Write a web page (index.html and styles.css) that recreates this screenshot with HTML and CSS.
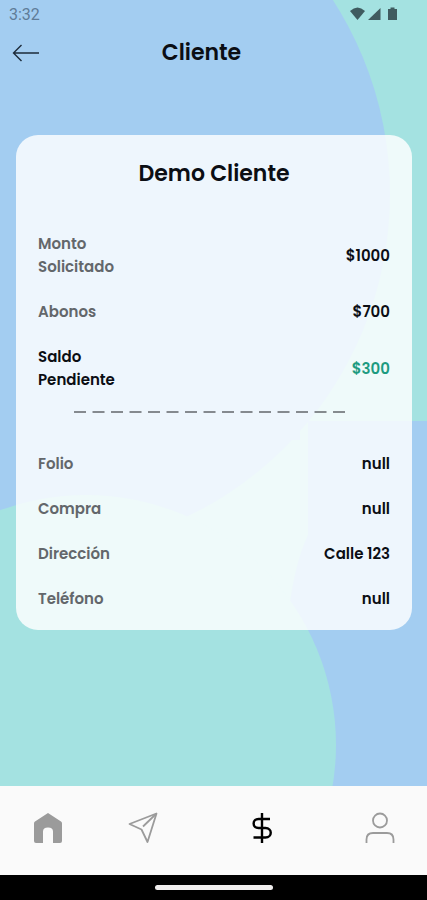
FILE: index.html
```
<!DOCTYPE html>
<html lang="es">
  <head>
    <meta charset="UTF-8" />
    <meta name="viewport" content="width=device-width, initial-scale=1.0" />
    <title>Cliente</title>
    <link rel="stylesheet" href="styles.css">
  </head>
  <body>
    <svg class="backdrop" viewBox="0 0 427 900" preserveAspectRatio="xMidYMid slice" aria-hidden="true">
      <path class="teal" d="M300 0H427V421H308V535Q296 560 290 602H0V440H300Z" />
      <circle class="blue" cx="32" cy="194" r="358" />
      <circle class="teal" cx="86" cy="745" r="250" />
    </svg>

    <div class="status-bar">
      <span>3:32</span>
      <svg class="status-icons" viewBox="0 0 48 14" aria-hidden="true">
        <path d="M0 4Q7.500 -3 15 4L7.500 13Z" />
        <path d="M18 13L30.500 1V13Z" />
        <path d="M38 2H40.500V0.500H44.500V2H47V13H38Z" />
      </svg>
    </div>

    <header class="top-bar">
      <button class="back-btn" type="button" aria-label="Volver">
        <svg viewBox="0 0 28 18">
          <path d="M27 9H1.500M9.500 1L1.500 9L9.500 17" />
        </svg>
      </button>
      <h1>Cliente</h1>
    </header>

    <main>
      <section class="card">
        <h2>Demo Cliente</h2>

        <dl class="details">
          <div class="row">
            <dt>Monto Solicitado</dt>
            <dd>$1000</dd>
          </div>
          <div class="row">
            <dt>Abonos</dt>
            <dd>$700</dd>
          </div>
          <div class="row balance">
            <dt>Saldo Pendiente</dt>
            <dd>$300</dd>
          </div>
        </dl>

        <svg class="divider" viewBox="0 0 271 2" aria-hidden="true">
          <path d="M0 1H271" />
        </svg>

        <dl class="details">
          <div class="row">
            <dt>Folio</dt>
            <dd>null</dd>
          </div>
          <div class="row">
            <dt>Compra</dt>
            <dd>null</dd>
          </div>
          <div class="row">
            <dt>Dirección</dt>
            <dd>Calle 123</dd>
          </div>
          <div class="row">
            <dt>Teléfono</dt>
            <dd>null</dd>
          </div>
        </dl>
      </section>
    </main>

    <nav class="tab-bar">
      <a href="#inicio" aria-label="Inicio">
        <svg viewBox="0 0 30 32">
          <path class="solid" d="M15 1L28 9.500Q29 10.200 29 11.500V29Q29 31 27 31H20V19.500Q20 15.500 15 15.500T10 19.500V31H3Q1 31 1 29V11.500Q1 10.200 2 9.500Z" />
        </svg>
      </a>
      <a href="#enviar" aria-label="Enviar">
        <svg viewBox="0 0 30 32">
          <path d="M28.500 1.500L1.500 12L13.500 17.500L19.500 30Z" />
          <path d="M28 2L15 14.500" />
        </svg>
      </a>
      <a class="active" href="#pagos" aria-label="Pagos" aria-current="page">
        <svg viewBox="0 0 30 32">
          <path d="M15 1V31M23 7H11.500C5 7 5 16 11.500 16H18.500C25.500 16 25.500 25.500 18.500 25.500H6.500" />
        </svg>
      </a>
      <a href="#perfil" aria-label="Perfil">
        <svg viewBox="0 0 30 32">
          <circle cx="15" cy="8.500" r="7" />
          <path d="M1.500 31V27.500Q1.500 21 8 21H22Q28.500 21 28.500 27.500V31" />
        </svg>
      </a>
    </nav>

    <div class="home-indicator"></div>
  </body>
</html>
```

FILE: styles.css
```
* {
  box-sizing: border-box;
}
body {
  margin: 0;
  min-height: 100vh;
  display: flex;
  flex-direction: column;
  position: relative;
  font-family: Poppins, Inter, sans-serif;
  background: #a3cdf1;
  color: #0b0e14;
}
h1,
h2 {
  margin: 0;
  font-size: 22px;
  font-weight: 600;
  line-height: 32px;
  text-align: center;
}
.backdrop {
  position: absolute;
  top: 0;
  left: 0;
  width: 100%;
  height: 100%;
  z-index: -1;
}
.teal {
  fill: #a4e2e1;
}
.blue {
  fill: #a3cdf1;
}
.status-bar {
  display: flex;
  align-items: center;
  justify-content: space-between;
  height: 28px;
  padding: 0 29px 0 9px;
  font-family: Roboto, sans-serif;
  font-size: 16px;
  color: #5f7c98;
}
.status-icons {
  width: 48px;
  height: 14px;
  fill: #3f5b5f;
}
.top-bar {
  display: grid;
  grid-template-columns: 40px 1fr 64px;
  align-items: center;
  height: 50px;
}
.back-btn {
  display: flex;
  justify-content: flex-end;
  padding: 0;
  border: none;
  background: none;
  cursor: pointer;
}
.back-btn svg {
  width: 28px;
  height: 18px;
  fill: none;
  stroke: #1c2b3a;
  stroke-width: 1.4;
}
main {
  flex: 1;
  padding: 57px 15px 24px 16px;
}
.card {
  padding: 23px 22px 20px;
  border-radius: 22px;
  background: rgba(255, 255, 255, 0.82);
}
.details {
  display: flex;
  flex-direction: column;
  gap: 22px;
  margin: 0;
  font-size: 15px;
  font-weight: 600;
  line-height: 23px;
}
h2 + .details {
  margin-top: 42px;
}
.row {
  display: flex;
  align-items: center;
  justify-content: space-between;
}
.row dt {
  max-width: 30%;
  color: #63676b;
}
.row dd {
  margin: 0;
}
.balance dt {
  color: #0b0e14;
}
.balance dd {
  color: #1d9b80;
}
.divider {
  display: block;
  width: 77%;
  margin: 20px 0 39px 36px;
  stroke: #63676b;
  stroke-width: 1.6;
  stroke-dasharray: 12 6.5;
}
.tab-bar {
  display: grid;
  grid-template-columns: 96fr 94fr 143fr 94fr;
  height: 89px;
  background: #fafafa;
}
.tab-bar a {
  display: flex;
  align-items: center;
  justify-content: center;
  padding-bottom: 5px;
  color: #9b9b9b;
}
.tab-bar svg {
  width: 30px;
  height: 32px;
  fill: none;
  stroke: currentColor;
  stroke-width: 1.8;
  stroke-linejoin: round;
}
.tab-bar .solid {
  fill: currentColor;
  stroke: none;
}
.tab-bar .active {
  color: #000;
}
.active svg {
  stroke-width: 2.4;
}
.home-indicator {
  display: flex;
  align-items: center;
  justify-content: center;
  height: 25px;
  background: #000;
}
.home-indicator::before {
  content: "";
  width: 118px;
  height: 5px;
  border-radius: 3px;
  background: #efeded;
}
```
